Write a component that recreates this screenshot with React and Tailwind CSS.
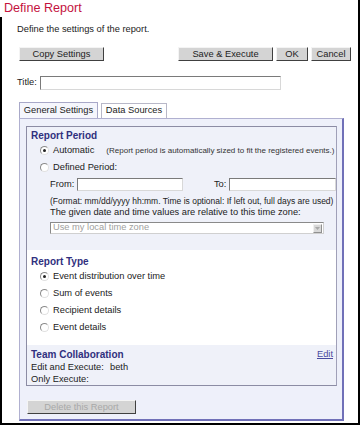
import React from "react";

const font = "font-['Liberation_Sans',Tahoma,Arial,sans-serif]";

function Radio({ checked }) {
  return (
    <span className="w-[9px] h-[9px] rounded-full border border-[#8a8a8a] border-r-[#e0e0e0] border-b-[#e0e0e0] bg-white flex items-center justify-center shrink-0">
      {checked && <span className="w-[3px] h-[3px] rounded-full bg-[#222]" />}
    </span>
  );
}

function Btn({ children, className = "", disabled = false }) {
  return (
    <button
      disabled={disabled}
      className={`h-[14px] border border-[#f4f4f4] border-r-[#404040] border-b-[#404040] bg-[#d4d4d4] text-[9.3px] leading-[12px] flex items-center justify-center whitespace-nowrap ${
        disabled ? "text-[#a8a8a8] bg-[#cfcfcf]" : "text-[#222]"
      } ${className}`}
    >
      {children}
    </button>
  );
}

function RadioRow({ checked, label, extra }) {
  return (
    <div className="h-[17px] flex items-center pl-[9px] gap-[4px] whitespace-nowrap">
      <Radio checked={checked} />
      <span>{label}</span>
      {extra && <span className="ml-[8px] text-[8px] text-[#333]">{extra}</span>}
    </div>
  );
}

export default function App() {
  return (
    <div className={`w-[360px] h-[425px] bg-white text-[9.3px] text-[#222] flex flex-col border-r-2 border-black ${font}`}>
      <div className="h-[17px] pl-[4px] text-[12.6px] leading-[17px] text-[#c4123e]">Define Report</div>
      <div className="flex-1 flex flex-col border-l-2 border-b-2 border-black">
        <div className="pl-[15px] mt-[6px] leading-[12px]">Define the settings of the report.</div>

        <div className="flex items-center mt-[12px] pl-[17px] pr-[7px]">
          <Btn className="w-[85px]">Copy Settings</Btn>
          <div className="flex-1" />
          <Btn className="w-[95px]">Save &amp; Execute</Btn>
          <Btn className="w-[32px] ml-[3px]">OK</Btn>
          <Btn className="w-[40px] ml-[3px]">Cancel</Btn>
        </div>

        <div className="flex items-center mt-[15px] pl-[15px]">
          <span>Title:</span>
          <div className="ml-[3px] w-[241px] h-[14px] border border-[#7a7a7a] border-r-[#d8d8d8] border-b-[#d8d8d8] bg-white" />
        </div>

        <div className="flex items-end mt-[12px] ml-[17px] h-[16px]">
          <div className="h-[16px] w-[79px] border border-b-0 border-[#a8a8c8] bg-[#f5f6fc] flex items-center justify-center">General Settings</div>
          <div className="h-[15px] w-[66px] ml-[3px] border border-b-0 border-[#b8b8c8] bg-white flex items-center justify-center">Data Sources</div>
        </div>

        <div className="ml-[17px] w-[325px] border border-[#b0b0d0] border-r-2 border-r-[#7070b8] border-b-2 border-b-[#7070b8] bg-[#eef0fa] pt-[7px] pl-[6px] pr-[5px] pb-[5px]">
          <div className="border border-[#8c8ca4] border-r-[#a0a0b8]">
            <div className="bg-[#eff1f9] pl-[4px] pb-[16px]">
              <div className="h-[14px] mt-[1px] flex items-center font-bold text-[10px] text-[#30307e]">Report Period</div>
              <RadioRow checked label="Automatic" extra="(Report period is automatically sized to fit the registered events.)" />
              <RadioRow label="Defined Period:" />
              <div className="pl-[19px] mt-[2px] flex items-center h-[13px]">
                <span>From:</span>
                <div className="ml-[3px] w-[107px] h-[13px] border border-[#7a7a7a] border-r-[#d8d8d8] border-b-[#d8d8d8] bg-white" />
                <span className="ml-[31px]">To:</span>
                <div className="ml-[3px] w-[108px] h-[13px] border border-[#7a7a7a] border-r-[#d8d8d8] border-b-[#d8d8d8] bg-white" />
              </div>
              <div className="pl-[19px] h-[12px] mt-[4px] flex items-center text-[8.5px] whitespace-nowrap">
                (Format: mm/dd/yyyy hh:mm. Time is optional: If left out, full days are used)
              </div>
              <div className="pl-[19px] h-[12px] flex items-center whitespace-nowrap">The given date and time values are relative to this time zone:</div>
              <div className="ml-[19px] mt-[3px] w-[274px] h-[12px] border border-[#8a8a8a] border-r-[#d0d0d0] border-b-[#d0d0d0] bg-white flex items-center">
                <span className="flex-1 pl-[2px] text-[#a0a0a0]">Use my local time zone</span>
                <span className="w-[9px] h-[9px] mr-[1px] bg-[#d8d8d8] border border-[#f0f0f0] border-r-[#909090] border-b-[#909090] flex items-center justify-center">
                  <svg width="5" height="3" viewBox="0 0 5 3"><path d="M0 0h5L2.5 3z" fill="#a8a8a8" /></svg>
                </span>
              </div>
            </div>

            <div className="bg-white pl-[4px] pt-[4px] pb-[9px]">
              <div className="h-[14px] flex items-center font-bold text-[10px] text-[#30307e]">Report Type</div>
              <RadioRow checked label="Event distribution over time" />
              <RadioRow label="Sum of events" />
              <RadioRow label="Recipient details" />
              <RadioRow label="Event details" />
            </div>

            <div className="bg-[#eff1f9] pl-[4px] pr-[3px] pt-[3px]">
              <div className="h-[13px] flex items-center">
                <span className="flex-1 font-bold text-[10px] text-[#30307e]">Team Collaboration</span>
                <span className="underline text-[#4a4aa0]">Edit</span>
              </div>
              <div className="h-[13px] flex items-center">
                <span className="w-[79px]">Edit and Execute:</span>
                <span>beth</span>
              </div>
              <div className="h-[11px] flex items-center">Only Execute:</div>
            </div>
          </div>

          <Btn disabled className="w-[109px] mt-[14px] ml-[1px]">Delete this Report</Btn>
        </div>
      </div>
    </div>
  );
}
